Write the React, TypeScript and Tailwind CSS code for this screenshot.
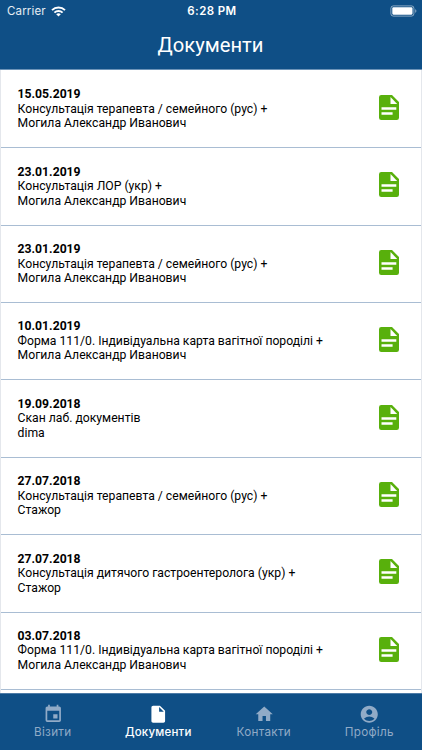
import { MdAccountCircle, MdEvent, MdHome, MdInsertDriveFile } from 'react-icons/md'

type VisitDocument = {
  date: string
  title: string
  person: string
}

const DOCUMENTS: VisitDocument[] = [
  { date: '15.05.2019', title: 'Консультація терапевта / семейного (рус) +', person: 'Могила Александр Иванович' },
  { date: '23.01.2019', title: 'Консультація ЛОР (укр) +', person: 'Могила Александр Иванович' },
  { date: '23.01.2019', title: 'Консультація терапевта / семейного (рус) +', person: 'Могила Александр Иванович' },
  { date: '10.01.2019', title: 'Форма 111/0. Індивідуальна карта вагітної породілі +', person: 'Могила Александр Иванович' },
  { date: '19.09.2018', title: 'Скан лаб. документів', person: 'dima' },
  { date: '27.07.2018', title: 'Консультація терапевта / семейного (рус) +', person: 'Стажор' },
  { date: '27.07.2018', title: 'Консультація дитячого гастроентеролога (укр) +', person: 'Стажор' },
  { date: '03.07.2018', title: 'Форма 111/0. Індивідуальна карта вагітної породілі +', person: 'Могила Александр Иванович' },
]

const TABS = [
  { label: 'Візити', icon: MdEvent },
  { label: 'Документи', icon: MdInsertDriveFile, active: true },
  { label: 'Контакти', icon: MdHome },
  { label: 'Профіль', icon: MdAccountCircle },
]

function StatusBar() {
  return (
    <div className="grid h-[22px] grid-cols-3 items-center pl-[7px] pr-[5px] font-['Inter',sans-serif] text-white">
      <div className="flex items-center gap-[5px] pt-px">
        <span className="text-[11.5px] tracking-[0.15px] text-white/90">Carrier</span>
        <svg viewBox="0 0 15 11" className="mb-px h-[11px] w-[15px]" fill="none" stroke="white" strokeWidth="1.9">
          <path d="M1 4.2a9.2 9.2 0 0 1 13 0" />
          <path d="M3.4 6.7a5.8 5.8 0 0 1 8.2 0" />
          <path d="M7.5 10.6 5.2 8.3a3.3 3.3 0 0 1 4.6 0z" fill="white" stroke="none" />
        </svg>
      </div>
      <span className="pt-px text-center text-[11.5px] font-semibold tracking-[0.4px]">6:28 PM</span>
      <svg viewBox="0 0 27 12" className="h-3 w-[27px] justify-self-end">
        <rect x="0.9" y="0.9" width="23" height="10.2" rx="2.4" fill="none" stroke="white" strokeOpacity="0.5" />
        <rect x="2.3" y="2.3" width="20.2" height="7.4" rx="1.1" fill="white" />
        <path d="M25.2 4.2v3.6c.8-.3 1.2-1 1.2-1.8s-.4-1.5-1.2-1.8z" fill="white" fillOpacity="0.5" />
      </svg>
    </div>
  )
}

function DocumentIcon() {
  return (
    <svg viewBox="0 0 20 25" className="mb-[3px] h-[25px] w-5 shrink-0">
      <path d="M2.3 0H13L20 7V22.7A2.3 2.3 0 0 1 17.7 25H2.3A2.3 2.3 0 0 1 0 22.7V2.3A2.3 2.3 0 0 1 2.3 0z" fill="#58b00c" />
      <path d="M11.5 2 18.2 8.9H11.5z" fill="white" />
      <path d="M2.5 12.3H17.3V14.7H2.5zM2.5 17.3H13.6V19.7H2.5z" fill="white" />
    </svg>
  )
}

function DocumentRow({ date, title, person }: VisitDocument) {
  return (
    <div className="flex h-[77.4px] shrink-0 items-center justify-between border-b border-[#a9bdd3] pl-[16.6px] pr-[22px]">
      <div className="whitespace-nowrap text-[12.2px] leading-[14.5px] text-black">
        <p className="font-bold">{date}</p>
        <p>{title}</p>
        <p>{person}</p>
      </div>
      <DocumentIcon />
    </div>
  )
}

export default function App() {
  return (
    <div className="flex h-[750px] w-[422px] flex-col overflow-hidden bg-white font-['Roboto',sans-serif]">
      <header className="h-[70px] shrink-0 border-b border-[#6d94b8] bg-[#0f4f86]">
        <StatusBar />
        <h1 className="pr-px pt-[9px] text-center text-[20.2px] leading-7 text-white">Документи</h1>
      </header>

      <main className="flex min-h-0 flex-1 flex-col overflow-hidden border-x border-[#e4e7ec] pt-[0.8px]">
        {DOCUMENTS.map((doc, idx) => (
          <DocumentRow key={idx} {...doc} />
        ))}
      </main>

      <nav className="grid h-[57px] shrink-0 grid-cols-4 border-t border-[#4d7ba6] bg-[#0f4f86] font-['Inter',sans-serif]">
        {TABS.map(({ label, icon: Icon, active }) => (
          <div
            key={label}
            className={`flex flex-col items-center pt-[10px] ${active ? 'font-medium text-white' : 'text-[#91abc7]'}`}
          >
            <Icon className="size-[20.5px]" />
            <span className={`leading-[15px] ${active ? 'text-[11.5px] tracking-[0.2px]' : 'text-[11.7px] tracking-[0.3px]'}`}>
              {label}
            </span>
          </div>
        ))}
      </nav>
    </div>
  )
}
